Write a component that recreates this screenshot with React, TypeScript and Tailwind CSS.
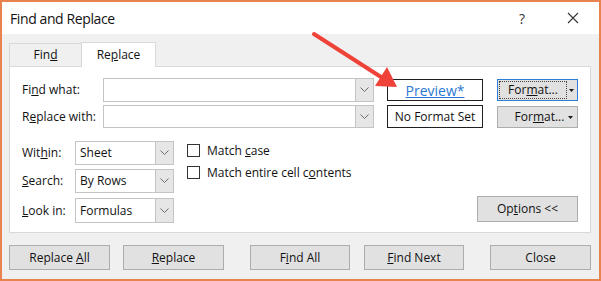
import React from 'react';

const Chevron = () => (
  <svg width="9" height="6" viewBox="0 0 9 6" fill="none">
    <polyline points="0.5,0.5 4.5,4.5 8.5,0.5" stroke="#6b6b6b" strokeWidth="1" />
  </svg>
);

const Combo = ({ w, h, text }: { w: string; h: string; text?: string }) => (
  <div className={`flex ${w} ${h} border border-[#c4c4c4] bg-white`}>
    <div className="flex-1 flex items-center pl-[4px] text-[12px] text-[#111]">{text}</div>
    <div className="w-[18px] flex items-center justify-center border-l border-[#c4c4c4] bg-[#e6e6e6]">
      <Chevron />
    </div>
  </div>
);

const Btn = ({ children, className = '' }: { children: React.ReactNode; className?: string }) => (
  <button className={`flex items-center justify-center border border-[#adadad] bg-[#e1e1e1] text-[12px] text-[#111] ${className}`}>
    {children}
  </button>
);

const Caret = () => (
  <svg width="5" height="3" viewBox="0 0 5 3">
    <polygon points="0,0 5,0 2.5,3" fill="#1a1a1a" />
  </svg>
);

export default function App() {
  return (
    <div className="relative w-[601px] h-[281px] bg-[#e8834f] p-[2px] font-['Open_Sans','Noto_Sans',sans-serif]">
      <div className="flex flex-col h-full bg-[#f0f0f0]">
        {/* title bar */}
        <div className="h-[32px] bg-white flex items-center pl-[8px] pr-[20px]">
          <span className="text-[14px] text-[#111] tracking-[-0.4px]">Find and Replace</span>
          <span className="ml-auto text-[14px] text-[#333]">?</span>
          <svg className="ml-[42px]" width="12" height="12" viewBox="0 0 12 12">
            <path d="M1 1 L11 11 M11 1 L1 11" stroke="#333" strokeWidth="1.1" />
          </svg>
        </div>

        <div className="flex-1 pl-[7px] pt-[8px]">
          {/* tabs */}
          <div className="flex items-end h-[24px]">
            <div className="w-[72px] h-[23px] border-t border-l border-[#d9d9d9] bg-[#f0f0f0] flex items-center justify-center text-[12px] text-[#111]">
              <span>Fin<span className="underline">d</span></span>
            </div>
            <div className="relative z-10 -mb-px w-[75px] h-[25px] border-t border-l border-r border-[#d9d9d9] bg-white flex items-center justify-center text-[12px] text-[#111]">
              <span>Re<span className="underline">p</span>lace</span>
            </div>
          </div>

          {/* panel */}
          <div className="w-[582px] h-[167px] border border-[#d9d9d9] bg-white pl-[12px] pr-[12px] pt-[11px] text-[12px] text-[#111]">
            <div className="flex items-center h-[24px]">
              <div className="w-[81px]">Fi<span className="underline">n</span>d what:</div>
              <Combo w="w-[271px]" h="h-[24px]" />
              <div className="ml-[13px] w-[96px] h-[22px] border border-[#1f1f1f] flex items-center justify-center">
                <span className="text-[14px] text-[#2a78d2] underline">Preview*</span>
              </div>
              <div className="ml-[14px] w-[81px] h-[22px] flex border border-[#2c7fd6] p-[1px] bg-[#e1e1e1]">
                <div className="flex-1 flex items-center justify-center border border-dotted border-[#444]">
                  <span>For<span className="underline">m</span>at...</span>
                </div>
                <div className="w-[9px] flex items-center justify-center">
                  <Caret />
                </div>
              </div>
            </div>
            <div className="flex items-center h-[23px] mt-[3px]">
              <div className="w-[81px]">R<span className="underline">e</span>place with:</div>
              <Combo w="w-[271px]" h="h-[23px]" />
              <div className="ml-[13px] w-[96px] h-[23px] border border-[#1f1f1f] flex items-center justify-center">
                No Format Set
              </div>
              <Btn className="ml-[14px] w-[81px] h-[22px] mt-[1px] relative">
                <span className="ml-[4px]">For<span className="underline">m</span>at...</span>
                <span className="absolute right-[4px] top-[9px] flex"><Caret /></span>
              </Btn>
            </div>

            <div className="flex mt-[13px]">
              <div className="flex flex-col">
                <div className="flex items-center">
                  <div className="w-[53px]">Wit<span className="underline">h</span>in:</div>
                  <Combo w="w-[99px]" h="h-[24px]" text="Sheet" />
                </div>
                <div className="flex items-center mt-[4px]">
                  <div className="w-[53px]"><span className="underline">S</span>earch:</div>
                  <Combo w="w-[99px]" h="h-[24px]" text="By Rows" />
                </div>
                <div className="flex items-center mt-[5px]">
                  <div className="w-[53px]"><span className="underline">L</span>ook in:</div>
                  <Combo w="w-[99px]" h="h-[25px]" text="Formulas" />
                </div>
              </div>

              <div className="flex flex-col ml-[13px] mt-[3px]">
                <div className="flex items-center h-[13px]">
                  <div className="w-[13px] h-[13px] border border-[#333] bg-white" />
                  <span className="ml-[7px]">Match <span className="underline">c</span>ase</span>
                </div>
                <div className="flex items-center h-[13px] mt-[9px]">
                  <div className="w-[13px] h-[13px] border border-[#333] bg-white" />
                  <span className="ml-[7px]">Match entire cell c<span className="underline">o</span>ntents</span>
                </div>
              </div>

              <Btn className="ml-auto self-end mb-[1px] w-[101px] h-[26px]">
                <span>Op<span className="underline">t</span>ions &lt;&lt;</span>
              </Btn>
            </div>
          </div>

          {/* bottom buttons */}
          <div className="flex mt-[12px]">
            <Btn className="w-[101px] h-[25px]"><span>Replace <span className="underline">A</span>ll</span></Btn>
            <Btn className="ml-[13px] w-[101px] h-[25px]"><span><span className="underline">R</span>eplace</span></Btn>
            <Btn className="ml-[26px] w-[100px] h-[25px]"><span>F<span className="underline">i</span>nd All</span></Btn>
            <Btn className="ml-[14px] w-[100px] h-[25px]"><span><span className="underline">F</span>ind Next</span></Btn>
            <Btn className="ml-[26px] w-[101px] h-[25px]">Close</Btn>
          </div>
        </div>
      </div>

      {/* annotation arrow */}
      <svg className="absolute left-0 top-0 pointer-events-none" width="601" height="281" viewBox="0 0 601 281">
        <line x1="314" y1="34" x2="381" y2="77" stroke="#ef4238" strokeWidth="4" strokeLinecap="round" />
        <polygon points="397,87 375,86 387,67" fill="#ef4238" />
      </svg>
    </div>
  );
}
